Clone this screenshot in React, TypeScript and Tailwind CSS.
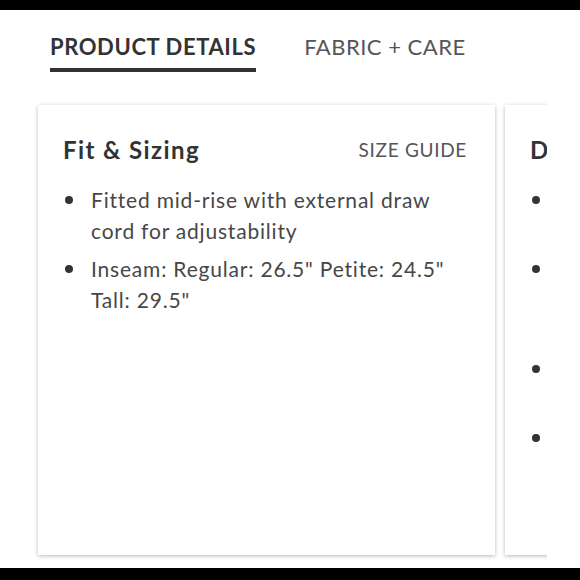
const FIT = [
  ['Fitted mid-rise with external draw', 'cord for adjustability'],
  ['Inseam: Regular: 26.5" Petite: 24.5"', 'Tall: 29.5"'],
]

const DETAILS = [
  ['Soft stretch fabric that moves', 'with you'],
  ['Side pockets and back welt', 'pocket with hidden zip for', 'your phone'],
  ['Tapered leg with elastic', 'cuffs'],
  ['Machine washable'],
]

function Card({ title, action, items }: { title: string; action?: string; items: string[][] }) {
  return (
    <div className="w-[457px] h-[450px] shrink-0 bg-white shadow-[0_1px_4px_rgba(0,0,0,0.28)] pt-[31px] pl-[25px] pr-[28px]">
      <div className="flex items-center justify-between h-[28px]">
        <h3 className="text-[24px] font-bold text-[#333] tracking-[1.4px] whitespace-nowrap">{title}</h3>
        {action && <span className="text-[19px] text-[#555] tracking-[0.7px]">{action}</span>}
      </div>
      <ul className="mt-[20px] space-y-[7px]">
        {items.map((lines, i) => (
          <li key={i} className="flex text-[21px] leading-[31px] text-[#474747] tracking-[0.8px]">
            <span className="w-[28px] shrink-0 flex pl-[2px] pt-[12px]">
              <span className="w-[8px] h-[8px] rounded-full bg-[#333]" />
            </span>
            <span className="whitespace-nowrap">
              {lines.map((l, j) => <div key={j}>{l}</div>)}
            </span>
          </li>
        ))}
      </ul>
    </div>
  )
}

export default function App() {
  return (
    <div className="w-[580px] h-[580px] bg-black flex flex-col" style={{ fontFamily: 'Lato, "Open Sans", sans-serif' }}>
      <div className="h-[10px] shrink-0" />
      <div className="h-[558px] bg-white">
        <div className="flex items-start gap-[48px] pl-[50px] pt-[23px]">
          <div className="pb-[7px] border-b-4 border-[#333]">
            <span className="block text-[22px] leading-[28px] font-bold text-[#333] tracking-[0.6px]">PRODUCT DETAILS</span>
          </div>
          <span className="block text-[22px] leading-[28px] text-[#555] tracking-[0.5px]">FABRIC + CARE</span>
        </div>
        <div className="ml-[30px] w-[517px] overflow-hidden mt-[25px]">
          <div className="flex gap-[10px] px-2 pt-2 pb-3">
            <Card title="Fit & Sizing" action="SIZE GUIDE" items={FIT} />
            <Card title="Details" items={DETAILS} />
          </div>
        </div>
      </div>
      <div className="h-[12px] shrink-0" />
    </div>
  )
}
